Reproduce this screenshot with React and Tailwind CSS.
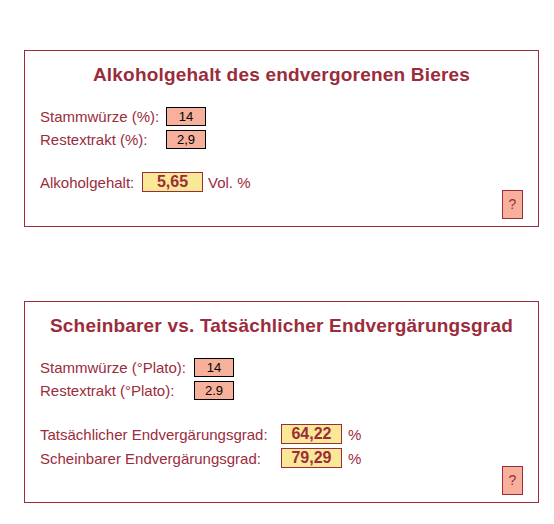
import React from 'react';

const maroon = 'text-[#9b2c3c]';

function InputBox({ value }) {
    return (
        <div className="w-[40px] h-[19px] bg-[#f7b09b] border border-black flex items-center justify-center text-[13px] text-black leading-none">
            {value}
        </div>
    );
}

function ResultBox({ value }) {
    return (
        <div className="w-[61px] h-[20px] bg-[#f9e996] border border-[#9b2c3c] flex items-center justify-center text-[16px] font-bold leading-none text-[#9b2c3c]">
            {value}
        </div>
    );
}

function Row({ label, labelWidth, children }) {
    return (
        <div className="flex items-center">
            <span className={`${labelWidth} text-[15px] leading-none ${maroon}`}>{label}</span>
            {children}
        </div>
    );
}

function HelpButton() {
    return (
        <div className="flex justify-end -mt-[2px]">
            <button className="w-[21px] h-[29px] bg-[#f7b09b] border border-[#9b2c3c] text-[14px] text-[#9b2c3c] flex items-center justify-center">
                ?
            </button>
        </div>
    );
}

function Panel({ title, children }) {
    return (
        <div className="w-[515px] border border-[#9b2c3c] pl-[15px] pr-[15px] pt-[12px] pb-[7px]">
            <h2 className={`h-[24px] leading-[24px] text-center text-[19px] font-bold tracking-[0.2px] ${maroon}`}>
                {title}
            </h2>
            {children}
        </div>
    );
}

export default function App() {
    return (
        <div
            className="w-[554px] h-[524px] bg-white pt-[50px] pl-[24px] flex flex-col gap-[74px]"
            style={{ fontFamily: '"Liberation Sans", Arial, sans-serif' }}
        >
            {/* Alkoholgehalt */}
            <Panel title="Alkoholgehalt des endvergorenen Bieres">
                <div className="mt-[20px] flex flex-col gap-[4px]">
                    <Row label="Stammwürze (%):" labelWidth="w-[126px]">
                        <InputBox value="14" />
                    </Row>
                    <Row label="Restextrakt (%):" labelWidth="w-[126px]">
                        <InputBox value="2,9" />
                    </Row>
                </div>
                <div className="mt-[23px]">
                    <Row label="Alkoholgehalt:" labelWidth="w-[102px]">
                        <ResultBox value="5,65" />
                        <span className={`ml-[5px] text-[15px] leading-none ${maroon}`}>Vol. %</span>
                    </Row>
                </div>
                <HelpButton />
            </Panel>

            {/* Endvergärungsgrad */}
            <Panel title="Scheinbarer vs. Tatsächlicher Endvergärungsgrad">
                <div className="mt-[20px] flex flex-col gap-[4px]">
                    <Row label="Stammwürze (°Plato):" labelWidth="w-[154px]">
                        <InputBox value="14" />
                    </Row>
                    <Row label="Restextrakt (°Plato):" labelWidth="w-[154px]">
                        <InputBox value="2.9" />
                    </Row>
                </div>
                <div className="mt-[24px] flex flex-col gap-[4px]">
                    <Row label="Tatsächlicher Endvergärungsgrad:" labelWidth="w-[241px]">
                        <ResultBox value="64,22" />
                        <span className={`ml-[6px] text-[15px] leading-none ${maroon}`}>%</span>
                    </Row>
                    <Row label="Scheinbarer Endvergärungsgrad:" labelWidth="w-[241px]">
                        <ResultBox value="79,29" />
                        <span className={`ml-[6px] text-[15px] leading-none ${maroon}`}>%</span>
                    </Row>
                </div>
                <HelpButton />
            </Panel>
        </div>
    );
}
